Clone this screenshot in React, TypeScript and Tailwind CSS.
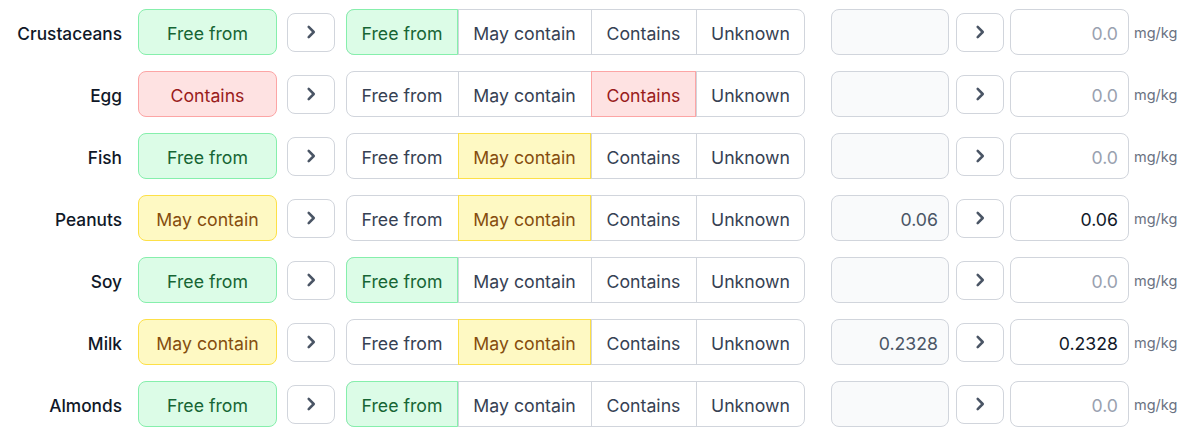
import React from 'react';

type Status = 'free' | 'may' | 'contains' | 'unknown';

interface Row {
  name: string;
  status: Status;
  selected: Status;
  value: string;
}

const ROWS: Row[] = [
  { name: 'Crustaceans', status: 'free', selected: 'free', value: '' },
  { name: 'Egg', status: 'contains', selected: 'contains', value: '' },
  { name: 'Fish', status: 'free', selected: 'may', value: '' },
  { name: 'Peanuts', status: 'may', selected: 'may', value: '0.06' },
  { name: 'Soy', status: 'free', selected: 'free', value: '' },
  { name: 'Milk', status: 'may', selected: 'may', value: '0.2328' },
  { name: 'Almonds', status: 'free', selected: 'free', value: '' },
];

const LABELS: Record<Status, string> = {
  free: 'Free from',
  may: 'May contain',
  contains: 'Contains',
  unknown: 'Unknown',
};

const TONE: Record<Status, string> = {
  free: 'bg-[#dcfce7] border-[#86efac] text-[#166534]',
  may: 'bg-[#fef9c3] border-[#fde047] text-[#854d0e]',
  contains: 'bg-[#fee2e2] border-[#fca5a5] text-[#991b1b]',
  unknown: 'bg-gray-100 border-gray-300 text-gray-700',
};

const SEGMENTS: { id: Status; width: string; first?: boolean; last?: boolean }[] = [
  { id: 'free', width: 'w-[112px]', first: true },
  { id: 'may', width: 'w-[133px]' },
  { id: 'contains', width: 'w-[105px]' },
  { id: 'unknown', width: 'w-[109px]', last: true },
];

const Chevron = () => (
  <svg width="22" height="22" viewBox="0 0 24 24" fill="none" stroke="currentColor" strokeWidth="2.8" strokeLinecap="round" strokeLinejoin="round">
    <path d="m9.5 6.5 5.5 5.5-5.5 5.5" />
  </svg>
);

const ArrowButton = () => (
  <button
    type="button"
    className="flex h-[39px] w-[48px] shrink-0 items-center justify-center rounded-lg border border-gray-300 bg-white text-gray-600"
  >
    <Chevron />
  </button>
);

const Segmented = ({ selected }: { selected: Status }) => (
  <div className="flex h-[46px] rounded-lg border border-gray-300 bg-white">
    {SEGMENTS.map((seg, i) => {
      const active = seg.id === selected;
      const rounded = seg.first ? 'rounded-l-lg' : seg.last ? 'rounded-r-lg' : '';
      return (
        <div
          key={seg.id}
          className={`${seg.width} ${rounded} -my-px flex items-center justify-center border pt-1 ${
            active ? TONE[seg.id] : 'border-transparent text-gray-700'
          } ${i > 0 && !active ? 'border-l-gray-300' : ''} ${seg.first ? '-ml-px' : ''} ${seg.last ? '-mr-px' : ''}`}
        >
          {LABELS[seg.id]}
        </div>
      );
    })}
  </div>
);

export default function App() {
  return (
    <div
      className="flex flex-col gap-4 bg-white pt-[9px] text-[17.7px]"
      style={{ fontFamily: 'Inter, "Noto Sans", sans-serif' }}
    >
      {ROWS.map((row) => (
        <div key={row.name} className="flex h-[46px] items-center">
          <div className="w-[122px] shrink-0 pt-1 text-right text-[17.3px] font-medium text-gray-900">{row.name}</div>
          <div
            className={`ml-4 flex h-[46px] w-[139px] shrink-0 items-center justify-center rounded-lg border pt-1 ${TONE[row.status]}`}
          >
            {LABELS[row.status]}
          </div>
          <div className="ml-[10px]">
            <ArrowButton />
          </div>
          <div className="ml-[11px]">
            <Segmented selected={row.selected} />
          </div>
          <div className="ml-[26px] flex h-[46px] w-[118px] items-center justify-end rounded-lg border border-gray-300 bg-gray-50 pt-1 pr-[10px] text-gray-600">
            {row.value}
          </div>
          <div className="ml-[7px]">
            <ArrowButton />
          </div>
          <div
            className={`ml-[6px] flex h-[46px] w-[119px] items-center justify-end rounded-lg border border-gray-300 bg-white pt-1 pr-[10px] ${
              row.value ? 'text-gray-900' : 'text-gray-400'
            }`}
          >
            {row.value || '0.0'}
          </div>
          <span className="ml-[5px] pt-0.5 text-[14.5px] text-gray-500">mg/kg</span>
        </div>
      ))}
    </div>
  );
}
